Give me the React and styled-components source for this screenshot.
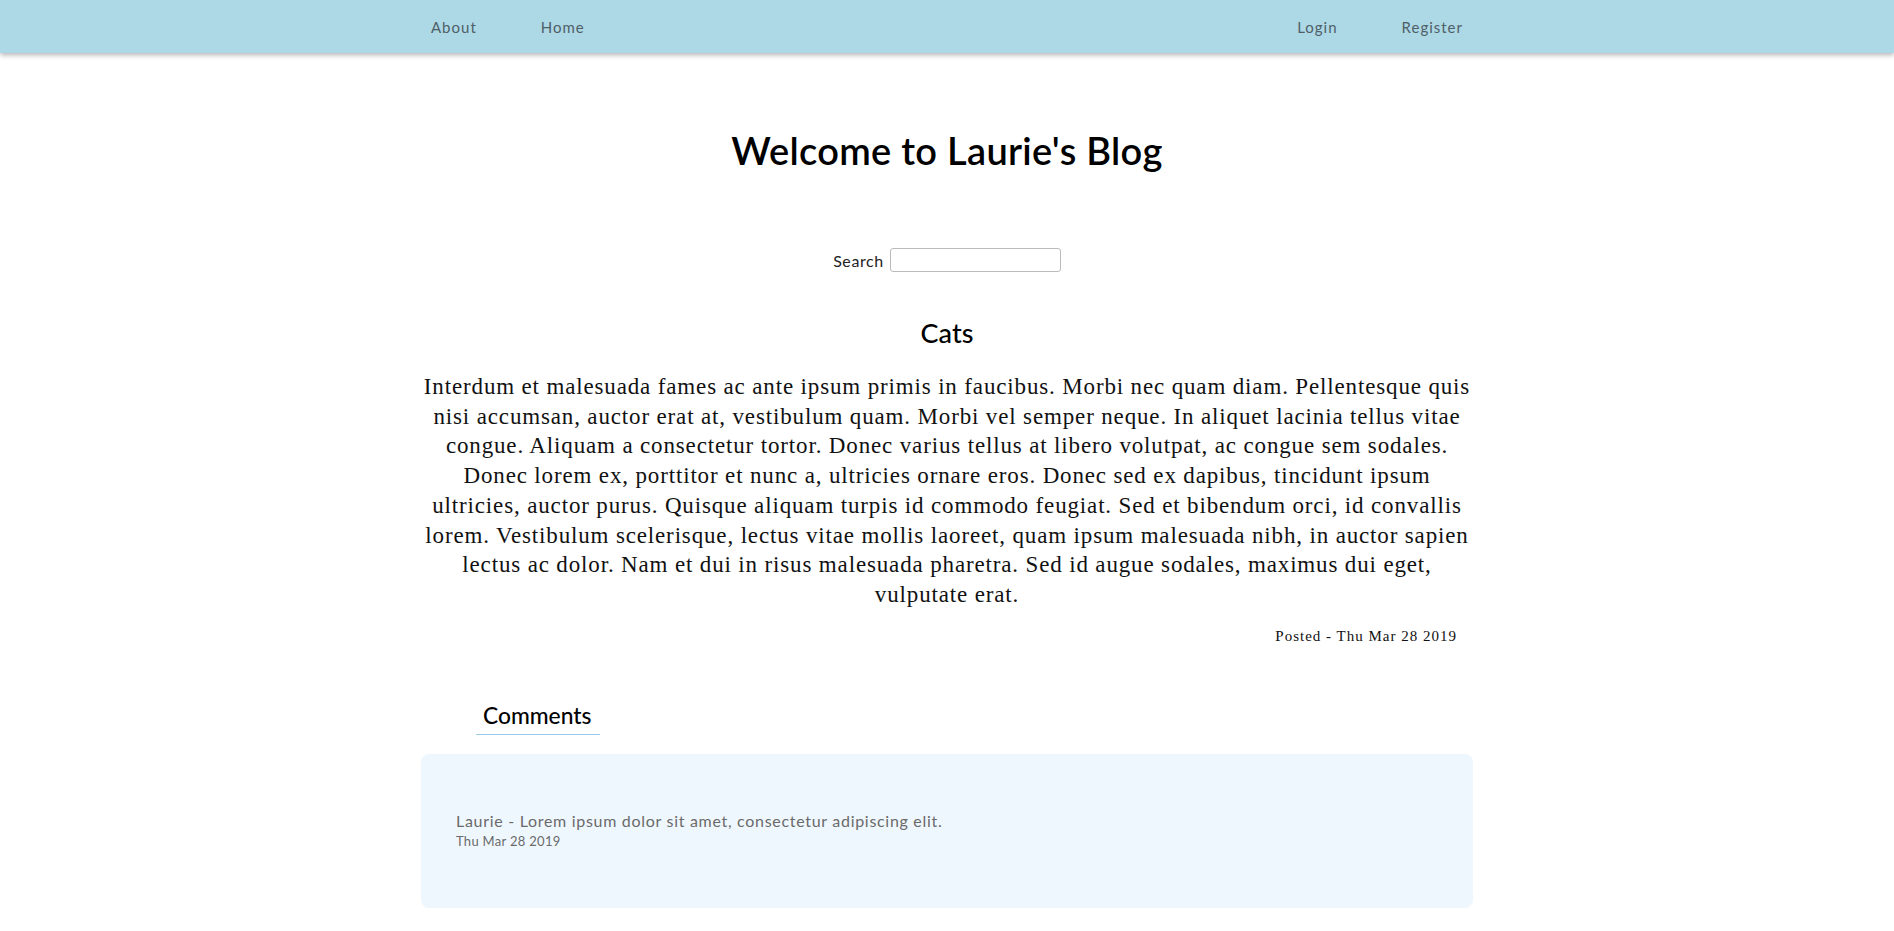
import React from 'react';
import styled, { createGlobalStyle } from 'styled-components';

const post = {
  title: 'Cats',
  body: 'Interdum et malesuada fames ac ante ipsum primis in faucibus. Morbi nec quam diam. Pellentesque quis nisi accumsan, auctor erat at, vestibulum quam. Morbi vel semper neque. In aliquet lacinia tellus vitae congue. Aliquam a consectetur tortor. Donec varius tellus at libero volutpat, ac congue sem sodales. Donec lorem ex, porttitor et nunc a, ultricies ornare eros. Donec sed ex dapibus, tincidunt ipsum ultricies, auctor purus. Quisque aliquam turpis id commodo feugiat. Sed et bibendum orci, id convallis lorem. Vestibulum scelerisque, lectus vitae mollis laoreet, quam ipsum malesuada nibh, in auctor sapien lectus ac dolor. Nam et dui in risus malesuada pharetra. Sed id augue sodales, maximus dui eget, vulputate erat.',
  date: 'Thu Mar 28 2019',
};

const comments = [
  { author: 'Laurie', text: 'Lorem ipsum dolor sit amet, consectetur adipiscing elit.', date: 'Thu Mar 28 2019' },
];

const App = () => {
  return (
    <>
      <GlobalStyle />
      <NavBar>
        <NavInner>
          <NavGroup>
            <NavLink>About</NavLink>
            <NavLink>Home</NavLink>
          </NavGroup>
          <NavGroup>
            <NavLink>Login</NavLink>
            <NavLink>Register</NavLink>
          </NavGroup>
        </NavInner>
      </NavBar>
      <Main>
        <Title>Welcome to Laurie's Blog</Title>
        <SearchRow>
          <SearchLabel htmlFor="search">Search</SearchLabel>
          <SearchInput id="search" type="text" />
        </SearchRow>
        <PostTitle>{post.title}</PostTitle>
        <PostBody>{post.body}</PostBody>
        <PostDate>Posted - {post.date}</PostDate>
        <CommentsHeading>Comments</CommentsHeading>
        <CommentBox>
          {comments.map((c, i) => (
            <div key={i}>
              <CommentText>{c.author} - {c.text}</CommentText>
              <CommentDate>{c.date}</CommentDate>
            </div>
          ))}
        </CommentBox>
      </Main>
    </>
  );
};

export default App;

// styled components
const GlobalStyle = createGlobalStyle`
  body {
    margin: 0;
    background: #fff;
    font-family: Lato, "Noto Sans", sans-serif;
  }
`;

const NavBar = styled.nav`
  height: 53px;
  background: #add8e6;
  box-shadow: 0 2px 5px rgba(0, 0, 0, 0.3);
`;

const NavInner = styled.div`
  width: 1052px;
  height: 100%;
  margin: 0 auto;
  padding: 0 10px;
  box-sizing: border-box;
  display: flex;
  justify-content: space-between;
  align-items: center;
`;

const NavGroup = styled.div`
  display: flex;
  gap: 64px;
`;

const NavLink = styled.a`
  font-family: Lato, sans-serif;
  font-size: 15px;
  letter-spacing: 1px;
  color: #4f5f66;
  cursor: pointer;
`;

const Main = styled.main`
  width: 1052px;
  margin: 0 auto;
  display: flex;
  flex-direction: column;
  align-items: center;
`;

const Title = styled.h1`
  margin: 74px 0 0;
  font-family: Lato, sans-serif;
  font-weight: 600;
  font-size: 38px;
  line-height: 46px;
  letter-spacing: 0.3px;
  color: #000;
`;

const SearchRow = styled.div`
  margin-top: 75px;
  display: flex;
  align-items: center;
  gap: 6px;
`;

const SearchLabel = styled.label`
  font-family: Lato, sans-serif;
  font-weight: 400;
  font-size: 16px;
  letter-spacing: 0.6px;
  color: #222;
`;

const SearchInput = styled.input`
  width: 171px;
  height: 24px;
  box-sizing: border-box;
  border: 1px solid #bbb;
  border-radius: 3px;
  padding: 2px 4px;
`;

const PostTitle = styled.h2`
  margin: 45px 0 0;
  font-family: Lato, sans-serif;
  font-weight: 500;
  font-size: 27px;
  line-height: 32px;
  color: #000;
`;

const PostBody = styled.p`
  margin: 23px 0 0;
  font-family: "Liberation Serif", serif;
  font-size: 23px;
  line-height: 29.7px;
  letter-spacing: 0.85px;
  text-align: center;
  color: #111;
`;

const PostDate = styled.div`
  align-self: flex-end;
  margin: 16px 16px 0 0;
  font-family: "Liberation Serif", serif;
  font-size: 15px;
  line-height: 20px;
  letter-spacing: 1px;
  color: #111;
`;

const CommentsHeading = styled.h3`
  align-self: flex-start;
  margin: 55px 0 0 55px;
  padding: 0 9px 5px 7px;
  border-bottom: 1px solid #9ccbee;
  font-family: Lato, sans-serif;
  font-weight: 500;
  font-size: 22.8px;
  line-height: 28px;
  color: #000;
`;

const CommentBox = styled.section`
  align-self: stretch;
  margin-top: 19px;
  padding: 56px 35px 58px;
  background: #eff7fe;
  border-radius: 8px;
`;

const CommentText = styled.div`
  font-family: Lato, sans-serif;
  font-size: 16px;
  line-height: 22px;
  letter-spacing: 0.7px;
  color: #6a6a6a;
`;

const CommentDate = styled.div`
  font-family: Lato, sans-serif;
  font-size: 13px;
  line-height: 18px;
  letter-spacing: 0.3px;
  color: #6a6a6a;
`;
